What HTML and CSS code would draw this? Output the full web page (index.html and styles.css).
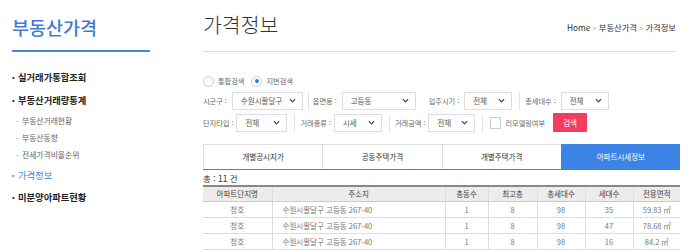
FILE: index.html
```html
<!DOCTYPE html>
<html lang="ko">
<head>
  <meta charset="UTF-8">
  <title>가격정보</title>
  <link rel="stylesheet" href="styles.css">
</head>
<body>
  <div class="page">
    <aside class="side">
      <h1 class="side-title">부동산가격</h1>
      <ul class="menu">
        <li class="menu-item">실거래가통합조회</li>
        <li class="menu-item">부동산거래량통계
          <ul class="sub">
            <li>부동산거래현황</li>
            <li>부동산동향</li>
            <li>전세가격비율순위</li>
          </ul>
        </li>
        <li class="menu-item active">가격정보</li>
        <li class="menu-item">미분양아파트현황</li>
      </ul>
    </aside>

    <main class="main">
      <div class="head">
        <h2 class="title">가격정보</h2>
        <div class="crumb">Home <span class="arr">&gt;</span> 부동산가격 <span class="arr">&gt;</span> 가격정보</div>
      </div>

      <div class="search">
        <div class="radios">
          <span class="radio"></span><span class="lbl">통합검색</span>
          <span class="radio on"></span><span class="lbl">지번검색</span>
        </div>
        <div class="row top">
          <span class="lbl">시군구 :</span>
          <span class="sel w70">수원시팔달구<svg viewBox="0 0 8 5"><path d="M1 1l3 3 3-3"/></svg></span>
          <span class="sep narrow"></span>
          <span class="lbl">읍면동 :</span>
          <span class="sel w74">고등동<svg viewBox="0 0 8 5"><path d="M1 1l3 3 3-3"/></svg></span>
          <span class="gap"></span>
          <span class="lbl">입주시기 :</span>
          <span class="sel w48">전체<svg viewBox="0 0 8 5"><path d="M1 1l3 3 3-3"/></svg></span>
          <span class="sep"></span>
          <span class="lbl">총세대수 :</span>
          <span class="sel w48">전체<svg viewBox="0 0 8 5"><path d="M1 1l3 3 3-3"/></svg></span>
        </div>
        <div class="row">
          <span class="lbl">단지타입 :</span>
          <span class="sel w50">전체<svg viewBox="0 0 8 5"><path d="M1 1l3 3 3-3"/></svg></span>
          <span class="sep"></span>
          <span class="lbl">거래종류 :</span>
          <span class="sel w48">시세<svg viewBox="0 0 8 5"><path d="M1 1l3 3 3-3"/></svg></span>
          <span class="sep"></span>
          <span class="lbl">거래금액 :</span>
          <span class="sel w47">전체<svg viewBox="0 0 8 5"><path d="M1 1l3 3 3-3"/></svg></span>
          <span class="sep"></span>
          <span class="check"></span>
          <span class="lbl">리모델링여부</span>
          <button class="btn">검색</button>
        </div>
      </div>

      <div class="tabs">
        <div class="tab">개별공시지가</div>
        <div class="tab">공동주택가격</div>
        <div class="tab">개별주택가격</div>
        <div class="tab active">아파트시세정보</div>
      </div>

      <div class="count">총 : 11 건</div>

      <table class="list">
        <colgroup>
          <col style="width:69px"><col style="width:173px"><col style="width:43px"><col style="width:49px"><col style="width:48px"><col style="width:48px"><col style="width:47px">
        </colgroup>
        <thead>
          <tr><th>아파트단지명</th><th>주소지</th><th>총동수</th><th>최고층</th><th>총세대수</th><th>세대수</th><th>전용면적</th></tr>
        </thead>
        <tbody>
          <tr><td>청호</td><td class="addr">수원시팔달구 고등동 267-40</td><td>1</td><td>8</td><td>98</td><td>35</td><td>59.83 ㎡</td></tr>
          <tr><td>청호</td><td class="addr">수원시팔달구 고등동 267-40</td><td>1</td><td>8</td><td>98</td><td>47</td><td>78.68 ㎡</td></tr>
          <tr><td>청호</td><td class="addr">수원시팔달구 고등동 267-40</td><td>1</td><td>8</td><td>98</td><td>16</td><td>84.2 ㎡</td></tr>
        </tbody>
      </table>
    </main>
  </div>
</body>
</html>
```

FILE: styles.css
```css
body {
  margin: 0;
  font-family: "Noto Sans CJK KR", "Noto Sans", sans-serif;
  color: #333;
  background: #fff;
}

.page {
  display: flex;
  width: 700px;
  height: 252px;
  overflow: hidden;
}

/* sidebar */
.side {
  width: 191px;
  padding-left: 12px;
  flex-shrink: 0;
}

.side-title {
  width: 138px;
  margin: 13px 0 0;
  padding-bottom: 9px;
  font-size: 18.5px;
  line-height: 28px;
  font-weight: 500;
  color: #3f7ad8;
  border-bottom: 2px solid #4a84e0;
}

.menu {
  list-style: none;
  margin: 17px 0 0;
  padding: 0;
}

.menu-item {
  font-size: 9.3px;
  line-height: 16px;
  font-weight: 700;
  color: #222;
  padding-bottom: 7px;
}

.menu-item::before {
  content: "•";
  display: inline-block;
  width: 6px;
  font-size: 7px;
  line-height: 16px;
  vertical-align: top;
}

.menu-item.active {
  color: #4a84e0;
  font-weight: 400;
  padding-bottom: 6px;
}

.sub {
  list-style: none;
  margin: 4px 0 -3px;
  padding: 0 0 0 4px;
}

.sub li {
  font-size: 7.8px;
  line-height: 17px;
  font-weight: 400;
  color: #666;
}

.sub li::before {
  content: "-";
  display: inline-block;
  width: 6px;
  color: #aaa;
  vertical-align: top;
}

/* main */
.main {
  width: 477px;
  flex-shrink: 0;
}

.head {
  display: flex;
  justify-content: space-between;
  align-items: flex-end;
  width: 473px;
  padding: 8px 0 11px;
  border-bottom: 1px solid #ddd;
}

.title {
  margin: 0;
  font-size: 20.5px;
  line-height: 32px;
  font-weight: 300;
  color: #333;
}

.crumb {
  font-size: 8.3px;
  line-height: 14px;
  color: #333;
  padding-bottom: 5px;
}

.arr {
  color: #aaa;
  font-size: 7px;
}

.search {
  margin-top: 22px;
  font-size: 7.2px;
  color: #666;
}

.radios {
  display: flex;
  align-items: center;
  height: 14px;
  gap: 4px;
}

.radio {
  box-sizing: border-box;
  width: 11px;
  height: 11px;
  border: 1px solid #ccc;
  border-radius: 50%;
  display: flex;
  align-items: center;
  justify-content: center;
}

.radio.on::after {
  content: "";
  width: 4px;
  height: 4px;
  border-radius: 50%;
  background: #3a78d8;
}

.radios .lbl {
  margin-right: 3px;
}

.row {
  display: flex;
  align-items: center;
  height: 18px;
  margin-top: 3.5px;
}

.row + .row {
  margin-top: 4px;
}

.row .lbl {
  margin-right: 3px;
  white-space: nowrap;
}

.row.top .lbl {
  margin-right: 5px;
}

.sel {
  box-sizing: border-box;
  height: 18px;
  display: flex;
  align-items: center;
  justify-content: space-between;
  padding: 0 6px 0 8px;
  border: 1px solid #ddd;
  font-size: 7.5px;
  color: #555;
  background: #fff;
}

.sel svg {
  width: 7px;
  height: 5px;
  fill: none;
  stroke: #444;
  stroke-width: 1.4;
}

.w70 { width: 71px; }
.w74 { width: 74px; }
.w50 { width: 51px; }
.w48 { width: 48px; }
.w47 { width: 47px; }

.sep {
  width: 1px;
  height: 18px;
  background: #e4e4e4;
  margin: 0 5px 0 7px;
}

.sep.narrow {
  margin: 0 4px 0 5px;
}

.gap {
  width: 13px;
}

.check {
  box-sizing: border-box;
  width: 11px;
  height: 12px;
  border: 1px solid #ccc;
  margin: 0 4px 0 2px;
}

.btn {
  margin-left: 5px;
  width: 34px;
  height: 19px;
  border: 0;
  padding: 0;
  background: #f23d5e;
  color: #fff;
  font-family: inherit;
  font-size: 7.5px;
  border-radius: 1px;
}

/* tabs */
.tabs {
  display: flex;
  margin-top: 12px;
  border-bottom: 1px solid #3b84e6;
}

.tab {
  flex: 1;
  height: 24px;
  display: flex;
  align-items: center;
  justify-content: center;
  font-size: 7.5px;
  color: #333;
  border-top: 1px solid #ddd;
  border-left: 1px solid #ddd;
}

.tab.active {
  background: #3b84e6;
  border-color: #3b84e6;
  color: #fff;
}

.count {
  font-size: 8.5px;
  line-height: 14px;
  margin-top: 1px;
  color: #333;
}

/* table */
.list {
  width: 477px;
  border-collapse: collapse;
  table-layout: fixed;
  border-top: 2px solid #888;
  font-size: 7.5px;
  color: #777;
}

.list th {
  height: 14px;
  padding: 0;
  background: #ececec;
  color: #444;
  font-weight: 400;
  border-left: 1px solid #ddd;
  border-bottom: 1px solid #ccc;
}

.list td {
  height: 15px;
  padding: 0;
  text-align: center;
  border-left: 1px solid #ddd;
  border-bottom: 1px solid #ddd;
}

.list th:first-child,
.list td:first-child {
  border-left: 0;
}

.list td.addr {
  text-align: left;
  padding-left: 10px;
}
```
